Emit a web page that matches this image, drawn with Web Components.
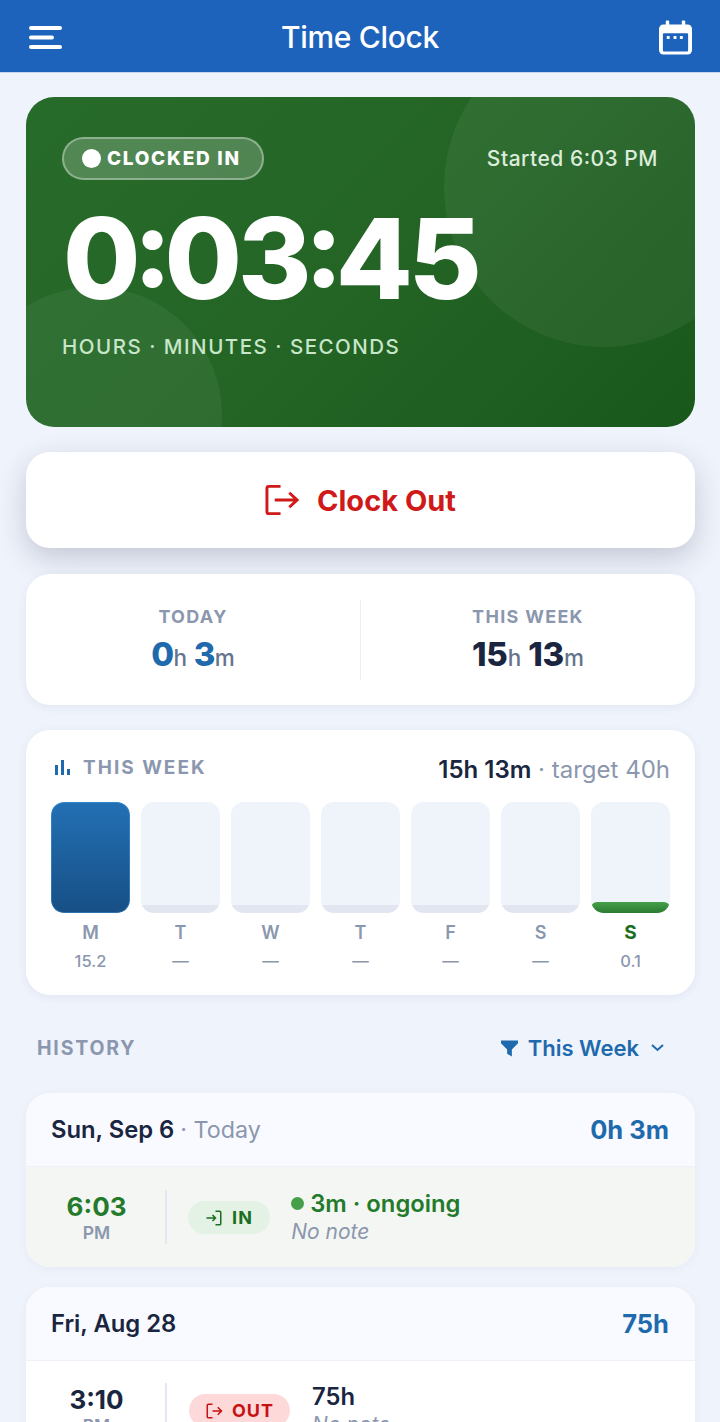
<!DOCTYPE html>
<html lang="en">
  <head>
    <meta charset="UTF-8" />
    <title>Time Clock</title>
    <style>
      html, body { margin: 0; padding: 0; }
      body {
        width: 720px;
        height: 1422px;
        overflow: hidden;
        background: #eff3fb;
        font-family: 'Inter', 'Liberation Sans', sans-serif;
      }
      main {
        display: flex;
        flex-direction: column;
        padding: 24px 25px 0 26px;
      }
      week-card { margin-top: 25px; }
      stats-card { margin-top: 26px; }
      clock-button { margin-top: 25px; }
      history-bar { margin-top: 25px; }
      day-card { margin-top: 20px; }
      history-bar + day-card { margin-top: 19px; }
    </style>
  </head>
  <body>
    <app-bar></app-bar>
    <main>
      <status-hero></status-hero>
      <clock-button></clock-button>
      <stats-card></stats-card>
      <week-card></week-card>
      <history-bar></history-bar>
      <day-card date="Sun, Sep 6" suffix="Today" total="0h 3m">
        <punch-row live time="6:03" kind="in" title="3m · ongoing"></punch-row>
      </day-card>
      <day-card date="Fri, Aug 28" total="75h">
        <punch-row time="3:10" kind="out" title="75h"></punch-row>
      </day-card>
    </main>

    <script>
      const ICON_OUT = '<path d="M10 3H4.5A1.5 1.5 0 0 0 3 4.5v15A1.5 1.5 0 0 0 4.5 21H10M10 12h12M17 7l5 5-5 5"/>';
      const ICON_IN = '<path d="M14 3h5.5A1.5 1.5 0 0 1 21 4.5v15a1.5 1.5 0 0 1-1.5 1.5H14M2 12h12M10 8l4 4-4 4"/>';

      // the colon sits mid-height between digits in the reference
      const raiseColon = t => t.replace(':', '<span class="c">:</span>');

      // small helper so each class only carries its css and markup
      class Base extends HTMLElement {
        render(html) {
          if (!this.shadowRoot) this.attachShadow({ mode: 'open' });
          this.shadowRoot.innerHTML = html;
        }
      }

      class AppBar extends Base {
        connectedCallback() {
          this.render(`
            <style>
              :host {
                display: flex;
                align-items: center;
                justify-content: space-between;
                box-sizing: border-box;
                height: 73px;
                padding: 2px 28px 0 29px;
                background: #1e63bb;
                border-bottom: 1px solid #c7d6ee;
                color: #fff;
              }
              h1 { margin: 0 1px 0 0; font-size: 30px; font-weight: 500; letter-spacing: -0.3px; }
              svg { display: block; }
            </style>
            <svg width="33" height="23" viewBox="0 0 33 23" fill="#fff">
              <rect x="0" y="0" width="33" height="4" rx="2"/>
              <rect x="0" y="9.500" width="25" height="4" rx="2"/>
              <rect x="0" y="19" width="33" height="4" rx="2"/>
            </svg>
            <h1>Time Clock</h1>
            <svg width="33" height="35" viewBox="0 0 34 35">
              <rect x="7" y="0" width="3.500" height="7" rx="1" fill="#fff"/>
              <rect x="23.500" y="0" width="3.500" height="7" rx="1" fill="#fff"/>
              <rect x="0" y="4" width="34" height="31" rx="4.500" fill="#fff"/>
              <rect x="4" y="13" width="26" height="19" rx="1" fill="#1e63bb"/>
              <rect x="8" y="16" width="3" height="3" fill="#fff"/>
              <rect x="15" y="16" width="3" height="3" fill="#fff"/>
              <rect x="21.500" y="16" width="3" height="3" fill="#fff"/>
            </svg>
          `);
        }
      }

      class StatusHero extends Base {
        connectedCallback() {
          // digit before a colon is set tighter, the colon too
          const clock = '<span class="t">0</span><span class="c">:</span>0<span class="t">3</span><span class="c">:</span>45';
          this.render(`
            <style>
              :host {
                display: block;
                position: relative;
                box-sizing: border-box;
                height: 330px;
                padding: 40px 37px 0 36px;
                border-radius: 28px;
                overflow: hidden;
                color: #fff;
                background: linear-gradient(135deg, #276b2a 0%, #246526 50%, #19581b 100%);
              }
              .orb { position: absolute; border-radius: 50%; background: rgba(255,255,255,0.055); }
              .orb.a { left: 418px; top: -70px; width: 320px; height: 320px; }
              .orb.b { left: -60px; top: 190px; width: 256px; height: 256px; }
              .top { position: relative; display: flex; justify-content: space-between; align-items: center; }
              .pill {
                display: flex;
                align-items: center;
                gap: 6px;
                box-sizing: border-box;
                height: 43px;
                padding: 0 21px 0 18px;
                border: 2.500px solid rgba(255,255,255,0.35);
                border-radius: 22px;
                background: rgba(255,255,255,0.2);
                font-size: 19px;
                font-weight: 800;
                letter-spacing: 1.700px;
              }
              .dot { width: 19px; height: 19px; border-radius: 50%; background: #fff; }
              .started { font-size: 21px; font-weight: 500; letter-spacing: 0.500px; color: #dcecdc; }
              .started .c { vertical-align: 2px; line-height: 0; }
              .clock {
                position: relative;
                margin: 10px 0 0 1px;
                font-size: 112px;
                line-height: 136px;
                font-weight: 800;
                letter-spacing: -4px;
              }
              .clock .t { letter-spacing: -7px; }
              .clock .c { font-size: 108px; vertical-align: 12px; line-height: 0; letter-spacing: -7px; }
              .units {
                position: relative;
                margin-top: 8px;
                font-size: 20.500px;
                font-weight: 500;
                letter-spacing: 1.500px;
                color: #c8e6c9;
              }
            </style>
            <div class="orb a"></div>
            <div class="orb b"></div>
            <div class="top">
              <div class="pill"><span class="dot"></span>CLOCKED IN</div>
              <div class="started">Started ${raiseColon('6:03')} PM</div>
            </div>
            <div class="clock">${clock}</div>
            <div class="units">HOURS · MINUTES · SECONDS</div>
          `);
        }
      }

      class ClockButton extends Base {
        connectedCallback() {
          this.render(`
            <style>
              :host {
                display: flex;
                align-items: center;
                justify-content: center;
                gap: 18px;
                height: 96px;
                border-radius: 24px;
                background: #fff;
                color: #d01919;
                font-size: 29px;
                font-weight: 700;
                box-shadow: 0 10px 28px rgba(40,50,80,0.22);
              }
              svg { display: block; }
            </style>
            <svg width="34" height="32" viewBox="0 0 35 32" fill="none" stroke="currentColor" stroke-width="3">
              <path d="M16 2H4a2 2 0 0 0-2 2v24a2 2 0 0 0 2 2h12"/>
              <path d="M10 16h22M25 8.500l8 7.500-8 7.500"/>
            </svg>
            <span>Clock Out</span>
          `);
        }
      }

      class StatsCard extends Base {
        connectedCallback() {
          this.render(`
            <style>
              :host {
                display: grid;
                grid-template-columns: 1fr 1px 1fr;
                align-items: center;
                box-sizing: border-box;
                height: 131px;
                padding: 26px 0 25px;
                border-radius: 24px;
                background: #fff;
                box-shadow: 0 2px 10px rgba(40,60,110,0.07);
                text-align: center;
              }
              .rule { height: 80px; background: #e9eef7; }
              .label { margin-top: 4px; font-size: 18px; font-weight: 700; letter-spacing: 1.300px; color: #8b97ae; }
              .value { margin-top: 7px; font-size: 33px; font-weight: 800; line-height: 40px; letter-spacing: -0.200px; color: #1a2540; }
              .value.blue { color: #1f6aad; letter-spacing: -0.600px; }
              small { font-size: 22.500px; font-weight: 500; letter-spacing: 0; color: #66738c; }
            </style>
            <div>
              <div class="label">TODAY</div>
              <div class="value blue">0<small>h</small> 3<small>m</small></div>
            </div>
            <div class="rule"></div>
            <div>
              <div class="label">THIS WEEK</div>
              <div class="value">15<small>h</small> 13<small>m</small></div>
            </div>
          `);
        }
      }

      class WeekCard extends Base {
        connectedCallback() {
          const days = [
            ['M', '15.2', 'full'], ['T', '—', ''], ['W', '—', ''], ['T', '—', ''],
            ['F', '—', ''], ['S', '—', ''], ['S', '0.1', 'today']
          ];
          const cols = days.map(d => `
            <div class="col ${d[2]}">
              <div class="track"><div class="fill"></div></div>
              <div class="day">${d[0]}</div>
              <div class="num">${d[1]}</div>
            </div>`).join('');
          this.render(`
            <style>
              :host {
                display: block;
                box-sizing: border-box;
                height: 265px;
                padding: 22px 25px 0;
                border-radius: 24px;
                background: #fff;
                box-shadow: 0 2px 10px rgba(40,60,110,0.07);
              }
              .head { display: flex; justify-content: space-between; align-items: center; height: 32px; }
              .title { display: flex; align-items: center; gap: 13px; margin: -2px 0 0 4px; font-size: 19px; font-weight: 700; letter-spacing: 2px; color: #8b97ae; }
              .sum { margin-top: 3px; font-size: 24px; color: #8b97ae; font-weight: 400; }
              .sum b { font-weight: 600; color: #1a2540; }
              .bars { display: grid; grid-template-columns: repeat(7, 1fr); gap: 11px; margin-top: 18px; }
              .col { text-align: center; }
              .track { position: relative; height: 111px; border-radius: 13px; overflow: hidden; background: #eff3fa; }
              .fill { position: absolute; left: 0; right: 0; bottom: 0; height: 8px; background: #e1e6f0; }
              .full .fill {
                height: 111px;
                border-radius: 13px;
                background: linear-gradient(180deg, #2370b4, #174f85);
                box-shadow: inset 0 0 0 1px rgba(70,160,230,0.45);
              }
              .today .fill { height: 11px; background: linear-gradient(180deg, #45a049, #2b7a2f); border-radius: 6px 6px 0 0; }
              .day { margin-top: 9px; font-size: 18px; line-height: 22px; font-weight: 600; color: #8b97ae; }
              .today .day { color: #1b6e20; font-weight: 700; font-size: 19px; }
              .num { margin-top: 7px; font-size: 16.500px; line-height: 20px; font-weight: 500; color: #8b97ae; }
              svg { display: block; }
            </style>
            <div class="head">
              <div class="title">
                <svg width="15" height="15" viewBox="0 0 15 15" fill="#1f6aad">
                  <rect x="0" y="5" width="3" height="10"/>
                  <rect x="6" y="0" width="3" height="15"/>
                  <rect x="12" y="9" width="3" height="6"/>
                </svg>
                THIS WEEK
              </div>
              <div class="sum"><b>15h 13m</b> · target 40h</div>
            </div>
            <div class="bars">${cols}</div>
          `);
        }
      }

      class HistoryBar extends Base {
        connectedCallback() {
          this.render(`
            <style>
              :host {
                display: flex;
                align-items: center;
                justify-content: space-between;
                box-sizing: border-box;
                height: 54px;
                padding: 2px 31px 0 11px;
              }
              .label { font-size: 19.500px; font-weight: 700; letter-spacing: 1.800px; color: #8b97ae; }
              .filter { display: flex; align-items: center; gap: 10px; font-size: 22px; font-weight: 600; color: #1f6aad; }
              svg { display: block; }
            </style>
            <div class="label">HISTORY</div>
            <div class="filter">
              <svg width="17" height="18" viewBox="0 0 18 18" fill="currentColor"><path d="M0 1h18v3l-6.500 6.500V18l-5-3v-4.500L0 4z"/></svg>
              <span>This Week</span>
              <svg style="margin-left:2px" width="13" height="8" viewBox="0 0 13 8" fill="none" stroke="currentColor" stroke-width="2"><path d="M1 1l5.500 5 5.500-5"/></svg>
            </div>
          `);
        }
      }

      class DayCard extends Base {
        connectedCallback() {
          const suffix = this.getAttribute('suffix');
          this.render(`
            <style>
              :host {
                display: block;
                border-radius: 24px;
                overflow: hidden;
                background: #fff;
                box-shadow: 0 2px 10px rgba(40,60,110,0.05);
              }
              .head {
                display: flex;
                align-items: center;
                justify-content: space-between;
                height: 73px;
                padding: 0 26px 0 25px;
                background: #f9faff;
                border-bottom: 1px solid #eef1f8;
                font-size: 23.800px;
                font-weight: 600;
                color: #1a2540;
              }
              .sub { font-size: 23.300px; font-weight: 400; color: #8b97ae; }
              .total { font-size: 25.500px; font-weight: 700; color: #1f6aad; }
            </style>
            <div class="head">
              <span>${this.getAttribute('date')}${suffix ? ` <span class="sub">· ${suffix}</span>` : ''}</span>
              <span class="total">${this.getAttribute('total')}</span>
            </div>
            <slot></slot>
          `);
        }
      }

      class PunchRow extends Base {
        connectedCallback() {
          const isIn = this.getAttribute('kind') === 'in';
          const live = this.hasAttribute('live');
          this.render(`
            <style>
              :host {
                display: flex;
                align-items: center;
                box-sizing: border-box;
                height: 100px;
                padding-bottom: ${live ? 0 : 2}px;
                background: ${live ? '#f3f6f2' : '#fff'};
                color: #1a2540;
              }
              .when { box-sizing: border-box; width: 141px; padding: 2px 0 0 2px; text-align: center; border-right: 2px solid #e2e7f1; height: 54px; margin-right: ${live ? 21 : 22}px; }
              .time { font-size: 26px; line-height: 30px; font-weight: 700; color: ${live ? '#237a2b' : '#1a2540'}; }
              .time .c { vertical-align: 3px; line-height: 0; }
              .ampm { font-size: 17.500px; line-height: 22px; font-weight: 600; color: #8b97ae; }
              .tag {
                display: flex;
                align-items: center;
                gap: 9px;
                height: 33px;
                margin-top: 1px;
                padding: 0 ${isIn ? 17 : 16}px;
                border-radius: 17px;
                font-size: 18px;
                font-weight: 700;
                letter-spacing: ${isIn ? 1.2 : 1}px;
                background: ${isIn ? '#e3f2e4' : '#fdd9d9'};
                color: ${isIn ? '#1b6e20' : '#c71212'};
              }
              .info { margin-left: ${live ? 21 : 22}px; }
              .title { display: flex; align-items: center; gap: 6px; font-size: 23.800px; line-height: 28px; font-weight: 600; color: ${live ? '#237a2b' : '#1a2540'}; }
              .dot { width: 13px; height: 13px; border-radius: 50%; background: #45a049; }
              .note { margin-top: 1px; font-size: 21px; line-height: 26px; font-style: italic; color: #8b97ae; }
              svg { display: block; }
            </style>
            <div class="when">
              <div class="time">${raiseColon(this.getAttribute('time'))}</div>
              <div class="ampm">PM</div>
            </div>
            <div class="tag">
              <svg width="18" height="18" viewBox="0 0 24 24" fill="none" stroke="currentColor" stroke-width="2">${isIn ? ICON_IN : ICON_OUT}</svg>
              ${isIn ? 'IN' : 'OUT'}
            </div>
            <div class="info">
              <div class="title">${live ? '<span class="dot"></span>' : ''}${this.getAttribute('title')}</div>
              <div class="note">No note</div>
            </div>
          `);
        }
      }

      customElements.define('app-bar', AppBar);
      customElements.define('status-hero', StatusHero);
      customElements.define('clock-button', ClockButton);
      customElements.define('stats-card', StatsCard);
      customElements.define('week-card', WeekCard);
      customElements.define('history-bar', HistoryBar);
      customElements.define('day-card', DayCard);
      customElements.define('punch-row', PunchRow);
    </script>
  </body>
</html>
